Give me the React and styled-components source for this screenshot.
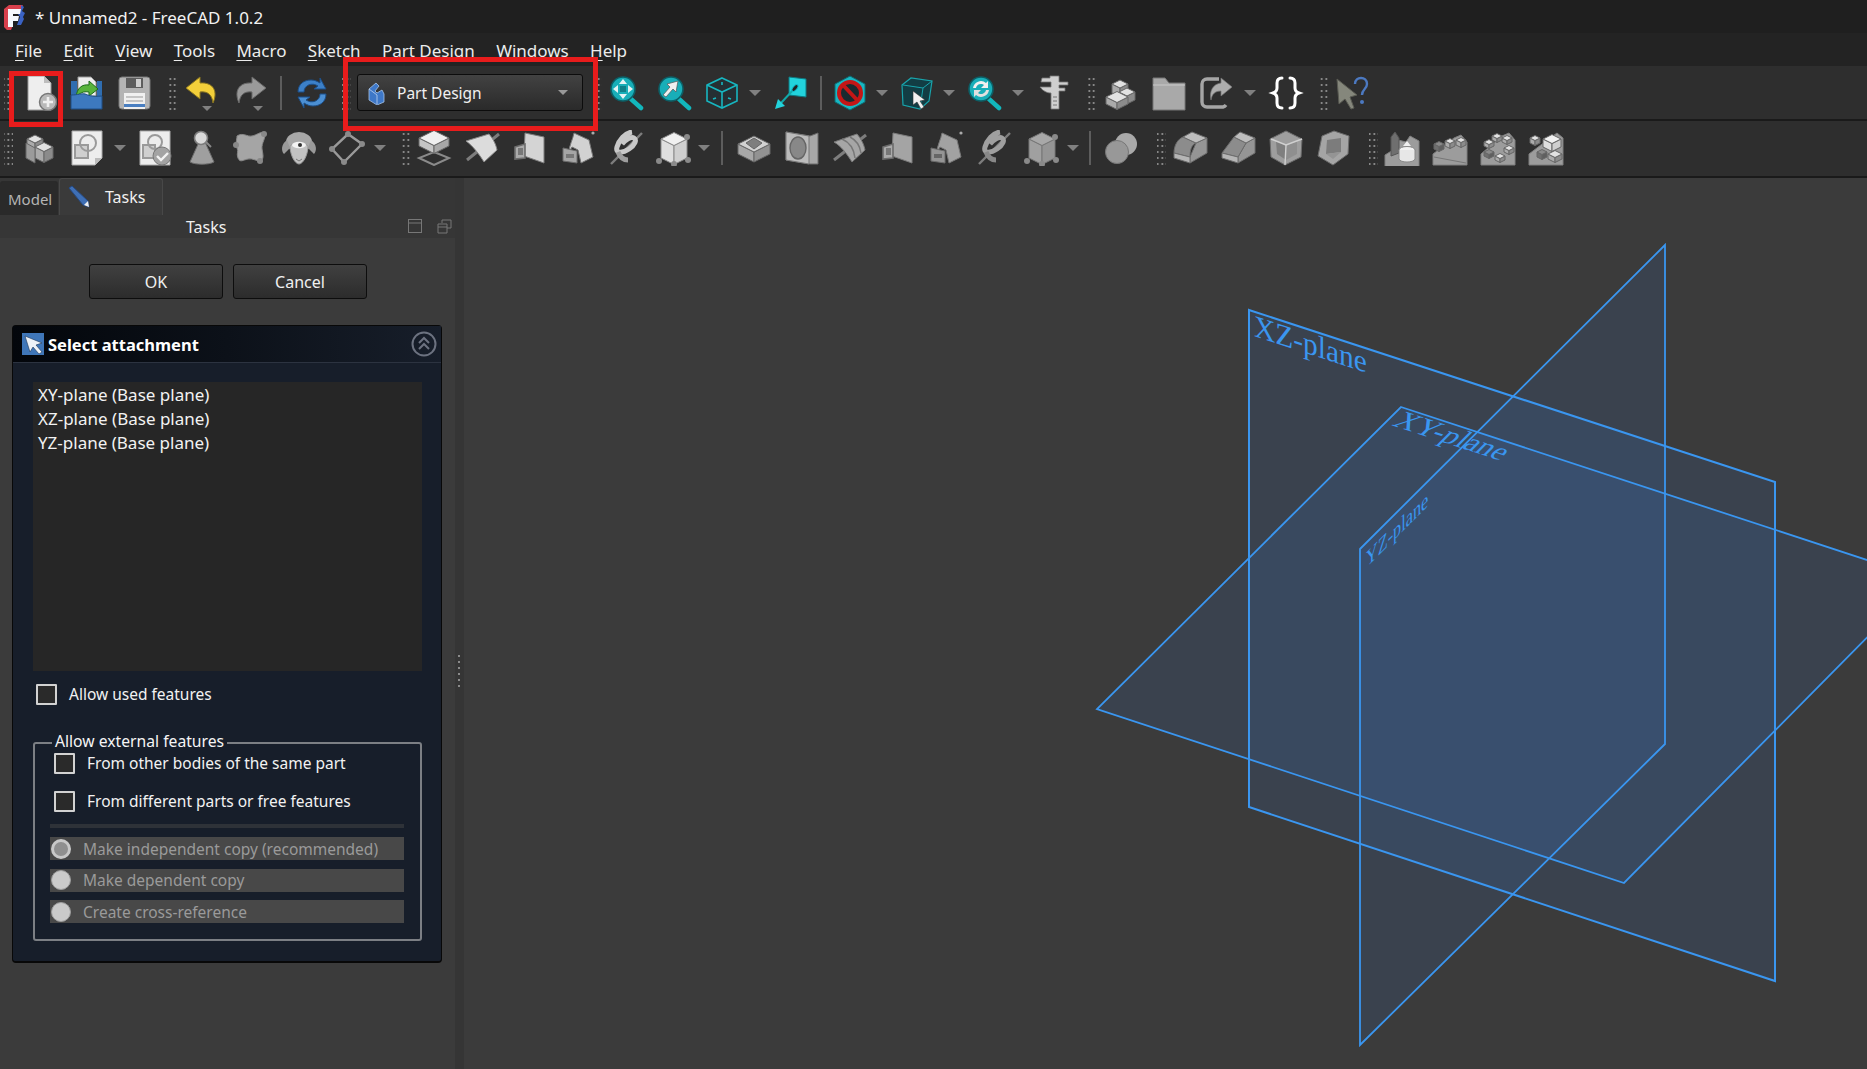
import React from 'react';
import styled, { createGlobalStyle } from 'styled-components';

const Global = createGlobalStyle`
  html, body { margin: 0; padding: 0; background: #3b3b3b; overflow: hidden; }
  #root { width: 1867px; height: 1069px; }
  * { box-sizing: border-box; }
`;

const Page = styled.div`
  position: relative;
  width: 1867px;
  height: 1069px;
  overflow: hidden;
  display: flex;
  flex-direction: column;
  background: #3b3b3b;
  color: #f0f0f0;
  font-family: "Noto Sans", "Open Sans", sans-serif;
  font-size: 16px;
`;
const TitleBar = styled.div`
  height: 33px;
  flex: none;
  display: flex;
  align-items: center;
  padding: 1px 0 0 4px;
  gap: 9px;
  background: #1f1f1f;
  font-size: 17px;
  color: #f2f2f2;
`;
const MenuBar = styled.div`
  height: 33px;
  flex: none;
  display: flex;
  align-items: center;
  padding: 2px 0 0 15px;
  gap: 21.3px;
  background: #232323;
  font-size: 17px;
  color: #ececec;
`;
const MenuItem = styled.span`
  white-space: nowrap;
  & u { text-underline-offset: 3px; text-decoration-thickness: 1px; }
`;
const Toolbar = styled.div`
  height: ${p => p.$h || 55}px;
  flex: none;
  display: flex;
  align-items: center;
  padding-left: 1px;
  padding-bottom: ${p => p.$pb || 0}px;
  background: #2e2e2e;
  border-bottom: 2px solid #1a1a1a;
`;
const ToolButton = styled.div`
  width: ${p => p.$w || 48}px;
  height: 44px;
  flex: none;
  display: flex;
  align-items: center;
  justify-content: center;
`;
const Grip = styled.div`
  width: ${p => p.$w}px;
  height: 34px;
  flex: none;
  background-image: radial-gradient(circle, #9a9a9a 0.9px, transparent 1.1px);
  background-size: 4.5px 6px;
  background-repeat: repeat;
  background-clip: content-box;
  padding-left: ${p => (p.$w - 9) / 2 + p.$shift}px;
  padding-right: ${p => (p.$w - 9) / 2 - p.$shift}px;
`;
const Sep = styled.div`
  width: ${p => p.$w}px;
  height: 34px;
  flex: none;
  display: flex;
  justify-content: center;
  &::after { content: ""; width: 2px; height: 100%; background: #5d5d5d; }
`;
const DropArrow = styled.div`
  width: ${p => p.$w || 20}px;
  height: 44px;
  flex: none;
  display: flex;
  align-items: center;
  justify-content: center;
  padding-right: 3px;
  &::after {
    content: "";
    width: 0; height: 0;
    border-left: 6px solid transparent;
    border-right: 6px solid transparent;
    border-top: 6px solid #808080;
  }
`;
const Combo = styled.div`
  width: 226px;
  height: 37px;
  flex: none;
  display: flex;
  align-items: center;
  padding: 0 14px 0 8px;
  gap: 11px;
  border: 1px solid #0c0c0c;
  border-radius: 3px;
  background: linear-gradient(#424242, #2a2a2a);
  font-size: 15.5px;
  color: #f0f0f0;
`;
const ComboLabel = styled.span` flex: 1; `;
const ComboArrow = styled.span`
  width: 0; height: 0;
  border-left: 5px solid transparent;
  border-right: 5px solid transparent;
  border-top: 5px solid #999;
`;
const Main = styled.div`
  flex: 1;
  min-height: 0;
  display: flex;
`;
const Side = styled.div`
  width: 455px;
  flex: none;
  display: flex;
  flex-direction: column;
  background: #3b3b3b;
`;
const Splitter = styled.div`
  width: 9px;
  flex: none;
  background: #353535;
  display: flex;
  flex-direction: column;
  align-items: center;
  justify-content: flex-start;
  gap: 4px;
  padding-top: 477px;
  padding-right: 1px;
`;
const SplitDot = styled.i` width: 2px; height: 2px; background: #8a8a8a; `;
const Viewport = styled.div`
  flex: 1;
  min-width: 0;
  background: #3b3b3b;
  & > svg { display: block; }
`;
const Tabs = styled.div`
  height: 37px;
  flex: none;
  display: flex;
  align-items: flex-end;
  gap: 1px;
  background: #363636;
`;
const Tab = styled.div`
  height: ${p => (p.$active ? 37 : 34)}px;
  width: ${p => p.$w}px;
  display: flex;
  align-items: center;
  gap: 14px;
  padding-left: 7px;
  border-radius: 3px 3px 0 0;
  border: 1px solid ${p => (p.$active ? '#484848' : '#2a2a2a')};
  border-bottom: none;
  background: ${p => (p.$active ? '#3a3a3a' : '#2a2a2a')};
  color: ${p => (p.$active ? '#f0f0f0' : '#b4b4b4')};
  font-size: ${p => (p.$active ? 16 : 15)}px;
`;
const DockTitle = styled.div`
  height: 23px;
  flex: none;
  position: relative;
  display: flex;
  align-items: center;
  justify-content: flex-end;
  gap: 14px;
  padding-right: 3px;
  background: #363636;
`;
const DockLabel = styled.span`
  position: absolute;
  left: 186px;
  font-size: 16px;
  color: #f0f0f0;
`;
const Buttons = styled.div`
  display: flex;
  gap: 10px;
  padding: 26px 0 0 89px;
`;
const PushButton = styled.div`
  width: 134px;
  height: 35px;
  display: flex;
  align-items: center;
  justify-content: center;
  border: 1px solid #0d0d0d;
  border-radius: 3px;
  background: linear-gradient(#404040, #2c2c2c);
  font-size: 16px;
`;
const Box = styled.div`
  margin: 26px 13px 0 12px;
  height: 638px;
  display: flex;
  flex-direction: column;
  border: 1px solid #080808;
  border-width: 1px 1px 2px 1px;
  border-radius: 4px;
  background: #171e2a;
`;
const BoxHeader = styled.div`
  height: 37px;
  flex: none;
  display: flex;
  align-items: center;
  gap: 4px;
  padding: 0 4px 0 9px;
  background: linear-gradient(90deg, #03060b 0%, #0c1119 50%, #171e2a 100%);
  border-bottom: 1px solid #2c3340;
  font-weight: 700;
  font-size: 16.5px;
  color: #fff;
`;
const BoxTitle = styled.span` flex: 1; `;
const ListBox = styled.div`
  margin: 19px 19px 0 20px;
  height: 289px;
  flex: none;
  padding: 1px 5px;
  background: #262626;
  font-size: 17px;
  line-height: 24px;
`;
const ListItem = styled.div` color: #f2f2f2; `;
const CheckRow = styled.div`
  display: flex;
  align-items: center;
  gap: 12px;
  font-size: 15.5px;
  color: #f2f2f2;
  margin: ${p => p.$m};
`;
const CheckBox = styled.span`
  width: 21px;
  height: 21px;
  flex: none;
  border: 2px solid #d2d2d2;
  background: #2a2a2a;
  border-radius: 1px;
`;
const Group = styled.div`
  position: relative;
  margin: 37px 19px 0 20px;
  height: 199px;
  border: 2px solid #7c7f84;
  border-radius: 3px;
  padding: 8px 16px 0 19px;
`;
const Legend = styled.span`
  position: absolute;
  top: -13px;
  left: 17px;
  line-height: 20px;
  padding: 0 3px;
  background: #171e2a;
  font-size: 15.7px;
  color: #f5f5f5;
`;
const Rule = styled.div`
  height: 4px;
  margin: 12px 0 9px -4px;
  background: #2e3238;
`;
const RadioRow = styled.div`
  height: 23px;
  margin: 0 0 8.5px -4px;
  display: flex;
  align-items: center;
  gap: 12px;
  background: #484848;
  font-size: 15.5px;
  color: #9a9a9a;
  padding-left: 1px;
`;
const Radio = styled.span`
  width: 20px;
  height: 20px;
  flex: none;
  border-radius: 50%;
  background: ${p => (p.$on ? '#8f8f8f' : '#cacaca')};
  border: ${p => (p.$on ? '3px solid #c8c8c8' : '1px solid #9c9c9c')};
`;
const RedBox = styled.div`
  position: absolute;
  left: ${p => p.$x}px;
  top: ${p => p.$y}px;
  width: ${p => p.$w}px;
  height: ${p => p.$h}px;
  border: 5px solid #e81c1c;
  pointer-events: none;
`;

/* ---------- icon helpers ---------- */
const Ic = ({ children, s = 36 }) => (
  <svg width={s} height={s} viewBox="0 0 36 36" fill="none">{children}</svg>
);
const pts = a => a.map(p => p.join(',')).join(' ');
const Iso = ({ x, y, s, h, t = '#e2e2e2', l = '#ababab', r = '#8b8b8b', e = '#666' }) => (
  <g stroke={e} strokeWidth="1" strokeLinejoin="round">
    <polygon fill={l} points={pts([[x - s, y], [x, y + s * 0.5], [x, y + s * 0.5 + h], [x - s, y + h]])} />
    <polygon fill={r} points={pts([[x + s, y], [x, y + s * 0.5], [x, y + s * 0.5 + h], [x + s, y + h]])} />
    <polygon fill={t} points={pts([[x, y - s * 0.5], [x + s, y], [x, y + s * 0.5], [x - s, y]])} />
  </g>
);
const Mag = ({ children }) => (
  <>
    <line x1="23" y1="24" x2="33" y2="33" stroke="#12b7bd" strokeWidth="4.5" strokeLinecap="round" />
    <circle cx="15" cy="14" r="12" fill="#18aeb8" stroke="#0c5f66" strokeWidth="1.6" />
    {children}
  </>
);

const I = {
  New: () => <Ic><path d="M7 1h16l7 7v27H7z" fill="#eeeeee" stroke="#999" /><path d="M23 1v7h7z" fill="#bdbdbd" /><circle cx="27" cy="27" r="8.5" fill="#b9b9b9" stroke="#777" strokeWidth="1.5" /><path d="M27 22v10M22 27h10" stroke="#efefef" strokeWidth="2.6" /></Ic>,
  Open: () => <Ic><path d="M9 2h13l5 5v14H9z" fill="#eee" stroke="#999" /><path d="M2 6h6v20H2z" fill="#2f6db0" /><path d="M28 6h5v20h-5z" fill="#2f6db0" /><path d="M7 22c1-9 6-13 13-12V6l9 8-9 7v-4c-6-1-9 1-13 5z" fill="#58b33c" stroke="#1f6b1c" /><path d="M2 20c7 0 11-2 14-1s6 3 17 2v13H2z" fill="#3d79bf" stroke="#1f4f85" /></Ic>,
  Save: () => <Ic><rect x="2" y="2" width="31" height="32" rx="3" fill="#b4b4b4" stroke="#777" /><rect x="9" y="3" width="17" height="10" fill="#5d5d5d" /><rect x="19" y="4" width="5" height="8" fill="#d0d0d0" /><rect x="7" y="18" width="21" height="16" fill="#f0f0f0" /><path d="M9 22h17M9 26h17" stroke="#999" /><rect x="7" y="29" width="21" height="3" fill="#4a7fc1" /></Ic>,
  Undo: () => <Ic><path d="M16 2 2 13l14 11v-7c8-1 12 3 13 11 5-11 1-21-13-20z" fill="#f3cf3a" stroke="#8a7620" /><polygon points="18,31 28,31 23,36" fill="#808080" /></Ic>,
  Redo: () => <Ic><path d="M20 2 34 13 20 24v-7c-8-1-12 3-13 11-5-11-1-21 13-20z" fill="#9a9a9a" stroke="#6a6a6a" /><polygon points="21,31 31,31 26,36" fill="#808080" /></Ic>,
  Refresh: () => <Ic><path d="M4 17C4 9 10 5 17 5c3 0 6 1 9 3V3l6 11H20l4-3c-6-4-14-1-14 6z" fill="#3c80c8" stroke="#1b4f8a" /><path d="M32 19c0 8-6 12-13 12-3 0-6-1-9-3v5L4 22h12l-4 3c6 4 14 1 14-6z" fill="#4b8fd3" stroke="#1b4f8a" /></Ic>,
  Fit: () => <Ic><Mag><path d="M15 4l4 5h-8zM15 24l4-5h-8zM5 14l5-4v8zM25 14l-5-4v8z" fill="#e4f3f4" /><rect x="12" y="11" width="6" height="6" fill="#0f7f88" /></Mag></Ic>,
  Sel: () => <Ic><Mag><path d="M22 6 11 9l3 3-7 8 3 2 7-8 3 3z" fill="#f0f0f0" stroke="#555" strokeWidth=".7" /></Mag></Ic>,
  Cube: () => <Ic><g stroke="#17b6c0" strokeWidth="1.6"><polygon points="18,3 33,10 33,26 18,33 3,26 3,10" fill="#252f33" /><path d="M3 10l15 7 15-7M18 17v16" /><path d="M18 7v3M9 24l3-1M24 23l3 1" /></g></Ic>,
  Plane: () => <Ic><polygon points="16,2 33,4 33,22 16,20" fill="#22d3dc" stroke="#0d7a82" /><path d="M21 14 8 28" stroke="#1aa" strokeWidth="2" /><ellipse cx="22" cy="13" rx="2" ry="4" transform="rotate(40 22 13)" fill="#222" stroke="#1bc" /><polygon points="2,34 5,24 12,31" fill="#22d3dc" /></Ic>,
  No: () => <Ic><polygon points="18,1 33,9 33,27 18,35 3,27 3,9" fill="#18b6c2" stroke="#0c6a70" /><circle cx="18" cy="18" r="11" stroke="#c41616" strokeWidth="4" fill="#1a2a30" /><line x1="11" y1="10" x2="26" y2="26" stroke="#c41616" strokeWidth="4" /></Ic>,
  CubeSel: () => <Ic><polygon points="3,10 12,3 33,6 30,26 21,34 4,30" fill="#123d44" stroke="#18a4ac" strokeWidth="1.2" /><path d="M4 10l20 3 9-7M24 13l-3 20" stroke="#18a4ac" strokeWidth="1" /><path d="M14 16v14l4-3 4 7 3-2-4-6 5-1z" fill="#f2f2f2" stroke="#333" strokeWidth=".6" /></Ic>,
  Sync: () => <Ic><Mag><path d="M7 13a8 8 0 0 1 13-5l2-2v7h-7l3-3a5 5 0 0 0-8 3z" fill="#f0f0f0" /><path d="M23 15a8 8 0 0 1-13 5l-2 2v-7h7l-3 3a5 5 0 0 0 8-3z" fill="#e0e0e0" /></Mag></Ic>,
  Caliper: () => <Ic><path d="M14 1h9v6h9v3h-9v3h6v3h-6v18h-8V18c-4 0-8-2-11-6h11V7H5l1-4h8z" fill="#cfcfcf" stroke="#777" strokeWidth=".8" /><path d="M17 22h4M17 26h4M17 30h4" stroke="#777" /></Ic>,
  Part: () => <Ic><Iso x={17} y={9} s={8} h={9} /><Iso x={24} y={17} s={8} h={8} /><Iso x={14} y={22} s={11} h={7} /></Ic>,
  Folder: () => <Ic><path d="M2 3h12l4 5h16v27H2z" fill="#a9a9a9" stroke="#777" /><path d="M2 10h32" stroke="#c9c9c9" /></Ic>,
  Share: () => <Ic><path d="M20 4H8a5 5 0 0 0-5 5v18a5 5 0 0 0 5 5h16a5 5 0 0 0 3-2" stroke="#a6a6a6" strokeWidth="3.4" /><path d="M22 3l11 9-11 9v-5c-6 0-9 3-10 9-2-9 2-16 10-17z" fill="#adadad" stroke="#777" strokeWidth=".7" /></Ic>,
  Braces: () => <Ic><g strokeWidth="3" stroke="#fff" strokeLinecap="round"><path d="M14 3c-4 0-5 2-5 5v5c0 3-1 4-4 5 3 1 4 2 4 5v5c0 3 1 5 5 5" /><path d="M22 3c4 0 5 2 5 5v5c0 3 1 4 4 5-3 1-4 2-4 5v5c0 3-1 5-5 5" /></g></Ic>,
  Help: () => <Ic><path d="M3 4l20 16-7 2 4 11-3 1-6-10-6 5z" fill="#85877c" stroke="#5a5b53" /><path d="M21 9c0-4 3-6 6-6s6 2 6 6c0 5-5 5-5 11" stroke="#4c79c1" strokeWidth="2.4" /><circle cx="28" cy="27" r="2" fill="#4c79c1" /></Ic>,

  Body: () => <Ic><Iso x={14} y={9} s={8} h={14} /><Iso x={23} y={17} s={9} h={11} /><polygon points="5,13 14,18 14,33 5,28" fill="#9b9b9b" stroke="#666" /></Ic>,
  Sketch: () => <Ic><path d="M3 1h30v27l-7 7H3z" fill="#ededed" stroke="#aaa" /><path d="M33 28h-7v7z" fill="#bbb" /><rect x="6" y="15" width="13" height="13" stroke="#9a9a9a" strokeWidth="2" fill="#cfcfcf" /><circle cx="19" cy="13" r="8" stroke="#9a9a9a" strokeWidth="2" /></Ic>,
  SketchCheck: () => <Ic><path d="M3 1h30v34H3z" fill="#ededed" stroke="#aaa" /><rect x="6" y="15" width="12" height="13" stroke="#9a9a9a" strokeWidth="2" fill="#cfcfcf" /><circle cx="18" cy="12" r="7" stroke="#9a9a9a" strokeWidth="2" /><circle cx="25" cy="26" r="9" fill="#a3a3a3" stroke="#777" /><path d="M20 26l4 4 7-7" stroke="#f2f2f2" strokeWidth="2.4" /></Ic>,
  Pawn: () => <Ic><path d="M14 12 5 32c5 3 19 3 24 0L20 12z" fill="#9f9f9f" stroke="#6d6d6d" /><circle cx="16" cy="8" r="6.5" fill="#d9d9d9" stroke="#7c7c7c" strokeWidth="1.6" /><line x1="21" y1="12" x2="26" y2="17" stroke="#888" strokeWidth="2" /></Ic>,
  Map: () => <Ic><path d="M4 6c6-4 10 1 15 0s9-5 12-3c3 4-3 10-2 16s2 9-1 12c-6 0-8-3-13-2S7 33 5 28s1-6-1-10 0-8 0-12z" fill="#a5a5a5" stroke="#888" /><circle cx="31" cy="4" r="3" fill="#888" /><circle cx="3" cy="15" r="3" fill="#888" /><circle cx="27" cy="31" r="3" fill="#888" /></Ic>,
  Sheep: () => <Ic><ellipse cx="18" cy="12" rx="13" ry="10" fill="#a8a8a8" /><path d="M6 10C0 14 0 21 3 24l6-6zM30 10c6 4 6 11 3 14l-6-6z" fill="#999" /><path d="M9 16c0 9 5 18 9 18s9-9 9-18c-4-4-14-4-18 0z" fill="#c2c2c2" stroke="#999" /><ellipse cx="18" cy="15" rx="7" ry="3.2" fill="#f3f3f3" /><circle cx="19" cy="15" r="2" fill="#333" /><path d="M15 29l3 2 3-2" stroke="#777" /></Ic>,
  Diamond: () => <Ic><polygon points="19,4 33,14 15,32 3,19" stroke="#9a9a9a" strokeWidth="2.4" /><g fill="#8a8a8a"><circle cx="19" cy="4" r="3" /><circle cx="33" cy="14" r="3" /><circle cx="15" cy="32" r="3" /><circle cx="3" cy="19" r="3" /></g></Ic>,

  Pad: () => <Ic><polygon points="18,22 33,28 18,35 3,28" stroke="#8a8a8a" strokeWidth="2" /><Iso x={18} y={8} s={15} h={8} t="#efefef" l="#c5c5c5" r="#a8a8a8" /></Ic>,
  Rev: () => <Ic><line x1="3" y1="30" x2="35" y2="4" stroke="#7d7d7d" strokeWidth="3" /><path d="M2 11 25 4c5 6 7 11 8 16L20 32C15 24 9 16 2 11z" fill="#dcdcdc" stroke="#888" /></Ic>,
  Loft: () => <Ic><polygon points="13,3 32,7 32,33 12,26" fill="#d4d4d4" stroke="#7c7c7c" /><polygon points="3,17 13,14 13,28 3,29" fill="#aaa" stroke="#6c6c6c" strokeWidth="1.6" /><rect x="6" y="18" width="5" height="7" fill="#777" /></Ic>,
  Pipe: () => <Ic><path d="M14 3l15 7 4 17-12 6-3-13-6-3-3 5C9 16 13 9 14 3z" fill="#d2d2d2" stroke="#777" /><polygon points="3,18 17,21 17,33 3,31" fill="#a5a5a5" stroke="#6c6c6c" /><rect x="6" y="24" width="8" height="4" fill="#777" /><circle cx="33" cy="3" r="1.6" fill="#aaa" /></Ic>,
  Helix: () => <Ic><line x1="3" y1="34" x2="34" y2="3" stroke="#7d7d7d" strokeWidth="2.4" /><path d="M24 2c-7 1-13 8-15 15s6 6 12 2 8-9 5-11-9 2-12 6" stroke="#c8c8c8" strokeWidth="5" /><path d="M10 22c2 5 6 8 10 8" stroke="#9d9d9d" strokeWidth="5" /></Ic>,
  Prim: () => <Ic><Iso x={18} y={9} s={13} h={19} t="#f0f0f0" l="#dfdfdf" r="#cfcfcf" e="#8a8a8a" /><g fill="#8a8a8a"><circle cx="31" cy="7" r="3" /><circle cx="3" cy="31" r="3" /><circle cx="32" cy="30" r="3" /><circle cx="18" cy="34" r="3" /></g></Ic>,

  Pocket: () => <Ic><Iso x={18} y={14} s={16} h={10} t="#d2d2d2" l="#a8a8a8" r="#929292" /><polygon points="18,8 26,13 18,19 10,13" fill="#7e7e7e" stroke="#666" /></Ic>,
  Hole: () => <Ic><polygon points="2,2 26,6 34,3 34,34 26,34 2,30" fill="#a8a8a8" stroke="#6c6c6c" /><polygon points="2,2 25,6 25,34 2,30" fill="#bcbcbc" stroke="#777" /><ellipse cx="14" cy="18" rx="8" ry="11" fill="#888" stroke="#666" strokeWidth="1.4" /></Ic>,
  Groove: () => <Ic><line x1="2" y1="30" x2="34" y2="5" stroke="#7d7d7d" strokeWidth="3" /><path d="M2 12 25 4c5 6 7 11 8 16L20 32C15 24 9 16 2 12z" fill="#a6a6a6" stroke="#777" /><path d="M10 9c7 3 12 10 13 19M18 7c6 3 10 9 11 16" stroke="#777" strokeWidth="1.5" /></Ic>,
  SubLoft: () => <Ic><polygon points="13,3 32,7 32,33 12,26" fill="#a4a4a4" stroke="#7c7c7c" /><polygon points="3,17 13,14 13,28 3,29" fill="#aaa" stroke="#6c6c6c" strokeWidth="1.6" /><rect x="6" y="18" width="5" height="7" fill="#777" /></Ic>,
  SubPipe: () => <Ic><path d="M14 3l15 7 4 17-12 6-3-13-6-3-3 5C9 16 13 9 14 3z" fill="#a2a2a2" stroke="#777" /><polygon points="3,18 17,21 17,33 3,31" fill="#959595" stroke="#6c6c6c" /><rect x="6" y="24" width="8" height="4" fill="#666" /><circle cx="33" cy="3" r="1.6" fill="#aaa" /></Ic>,
  SubHelix: () => <Ic><line x1="3" y1="34" x2="34" y2="3" stroke="#7d7d7d" strokeWidth="2.4" /><path d="M24 2c-7 1-13 8-15 15s6 6 12 2 8-9 5-11-9 2-12 6" stroke="#9f9f9f" strokeWidth="5" /><path d="M10 22c2 5 6 8 10 8" stroke="#888" strokeWidth="5" /></Ic>,
  SubPrim: () => <Ic><Iso x={18} y={9} s={13} h={19} t="#a8a8a8" l="#a0a0a0" r="#959595" e="#777" /><g fill="#8a8a8a"><circle cx="31" cy="7" r="3" /><circle cx="3" cy="31" r="3" /><circle cx="32" cy="30" r="3" /><circle cx="18" cy="34" r="3" /></g></Ic>,
  Bool: () => <Ic><circle cx="22" cy="14" r="11" fill="#a9a9a9" /><circle cx="13" cy="22" r="11.5" fill="#989898" stroke="#777" /></Ic>,

  Fillet: () => <Ic><g stroke="#6c6c6c" strokeLinejoin="round"><polygon points="24,13 35,8 35,23 18,33 18,27" fill="#959595" /><path d="M2 23C2 15 6 9 11 7L24 13c-5 2-6 8-6 14z" fill="#8c8c8c" /><polygon points="11,7 20,2 35,8 24,13" fill="#bdbdbd" /><polygon points="2,23 18,27 18,33 2,28" fill="#b5b5b5" /></g></Ic>,
  Chamfer: () => <Ic><g stroke="#6c6c6c" strokeLinejoin="round"><polygon points="26,13 35,8 35,23 18,33 18,27" fill="#959595" /><polygon points="2,23 14,7 26,13 18,27" fill="#8c8c8c" /><polygon points="14,7 20,2 35,8 26,13" fill="#bdbdbd" /><polygon points="2,23 18,27 18,33 2,28" fill="#b5b5b5" /></g></Ic>,
  Draft: () => <Ic><polygon points="18,1 34,9 33,27 17,35 3,27 2,9" fill="#9e9e9e" stroke="#6c6c6c" /><polygon points="8,11 18,16 18,30 9,24" fill="#7f7f7f" /><polygon points="18,16 29,11 29,24 18,30" fill="#8f8f8f" /><path d="M3 9l15 6 16-6M18 15l-1 20" stroke="#d0d0d0" strokeWidth="1.4" /></Ic>,
  Thick: () => <Ic><polygon points="6,6 18,1 33,6 32,24 17,35 2,26" fill="#a5a5a5" stroke="#6c6c6c" /><polygon points="11,10 25,8 25,22 10,24" fill="#7c7c7c" /><polygon points="10,24 25,22 17,29" fill="#949494" /></Ic>,

  Mirror: () => <Ic><path d="M1 25l8-5 5-10 8 2 4-6 9 5v26H1z" fill="#9c9c9c" stroke="#7e7e7e" /><polygon points="7,7 11,2 15,8 15,23 7,26" fill="#6f6f6f" stroke="#555" /><ellipse cx="23" cy="20" rx="8" ry="3.5" fill="#f2f2f2" stroke="#888" /><path d="M15 20v9c1 4 15 4 16 0v-9" fill="#e7e7e7" stroke="#888" /><path d="M19 16l4-5 4 5z" fill="#f0f0f0" /></Ic>,
  Linear: () => <Ic><path d="M1 24 22 8l7-3 6 7v23H1z" fill="#9c9c9c" stroke="#7e7e7e" /><Iso x={7} y={14} s={5} h={5} t="#8a8a8a" l="#6f6f6f" r="#5f5f5f" /><Iso x={18} y={11} s={5} h={5} /><Iso x={29} y={10} s={5} h={5} /><path d="M2 27l32 6" stroke="#777" /></Ic>,
  Polar: () => <Ic><path d="M1 24 22 6l7-3 6 7v25H1z" fill="#9c9c9c" stroke="#7e7e7e" /><Iso x={9} y={22} s={5} h={4} t="#8a8a8a" l="#6f6f6f" r="#5f5f5f" /><Iso x={20} y={26} s={5} h={4} /><Iso x={29} y={18} s={5} h={4} /><Iso x={27} y={8} s={5} h={4} /><Iso x={17} y={6} s={5} h={4} /><Iso x={9} y={12} s={5} h={4} /></Ic>,
  Multi: () => <Ic><path d="M1 24 22 8l7-5 6 5v27H1z" fill="#9c9c9c" stroke="#7e7e7e" /><Iso x={7} y={8} s={5} h={5} /><Iso x={24} y={9} s={9} h={8} t="#f2f2f2" l="#dedede" r="#cfcfcf" /><Iso x={14} y={22} s={5} h={5} t="#8a8a8a" l="#6f6f6f" r="#5f5f5f" /><Iso x={27} y={24} s={7} h={5} /></Ic>,
};

const Logo = () => (
  <svg width="22" height="25" viewBox="0 0 22 25">
    <polygon points="0,4 5,0 19,0 17,4 9,5 9,20 7,25 3,25 0,22" fill="#d8404c" />
    <polygon points="17,0 20,2 18,6 21,8 19,12 20,14 17,20 13,20 16,12 14,9 17,4" fill="#3a62c4" />
    <polygon points="4,4 17,4 16,9 9,9 9,11 15,11 14,16 9,16 9,22 4,22" fill="#f5f7fb" />
  </svg>
);
const PartDesignIcon = () => (
  <svg width="20" height="24" viewBox="0 0 20 24">
    <path d="M3 8l7-6 3 3-4 5 2 2 5-3 2 4v8l-7 3-8-5z" fill="#3e78c8" stroke="#a6c4ea" strokeWidth=".8" />
    <path d="M3 8l8 6v9" stroke="#bcd2ef" strokeWidth=".8" fill="none" />
  </svg>
);
const Pencil = () => (
  <svg width="24" height="24" viewBox="0 0 24 24">
    <path d="M2 3l3-2 16 15 1 6-6-2z" fill="#3f6fb5" stroke="#254a85" />
    <path d="M17 20l4-4 1 6z" fill="#f0f0f0" />
  </svg>
);
const CursorBadge = () => (
  <svg width="22" height="22" viewBox="0 0 22 22">
    <rect width="22" height="22" fill="#3f76b8" />
    <path d="M3 3l17 7-6 2 6 7-3 2-6-7-3 5z" fill="#eef2f7" stroke="#1c3558" strokeWidth=".6" />
  </svg>
);
const Collapse = () => (
  <svg width="26" height="26" viewBox="0 0 26 26" fill="none" stroke="#6c7280" strokeWidth="2">
    <circle cx="13" cy="13" r="11.5" />
    <path d="M8 12l5-5 5 5M8 18l5-5 5 5" />
  </svg>
);
const DockBtn = ({ float }) => (
  <svg width="15" height="15" viewBox="0 0 15 15" fill="none" stroke="#777">
    {float
      ? <path d="M5 1h9v8h-4M1 5h9v9H1zM1 8h9M5 4V1" />
      : <><rect x=".5" y=".5" width="13" height="13" /><path d="M.5 4h13" /></>}
  </svg>
);

/* ---------- toolbar data ---------- */
const row1 = [
  ['g', 14, 0], 'New', 'Open', 'Save', ['g', 19, 5], 'Undo', 'Redo', ['s', 14], 'Refresh', ['g', 21, 0], 'combo',
  ['g', 19, 5], 'Fit', 'Sel', 'Cube', ['d', 21], 'Plane', ['s', 11], 'No', ['d', 19], 'CubeSel', ['d', 19], 'Sync', ['d', 22], 'Caliper',
  ['g', 19, 5], 'Part', 'Folder', 'Share', ['d', 21], 'Braces', ['g', 18, 4], 'Help',
];
const row2 = [
  ['g', 14, 0], 'Body', 'Sketch', ['d', 20], 'SketchCheck', 'Pawn', 'Map', 'Sheep', 'Diamond', ['d', 21],
  ['g', 18, 4], 'Pad', 'Rev', 'Loft', 'Pipe', 'Helix', 'Prim', ['d', 15], ['s', 17],
  'Pocket', 'Hole', 'Groove', 'SubLoft', 'SubPipe', 'SubHelix', 'SubPrim', ['d', 16], ['s', 16],
  'Bool', ['g', 20, 5], 'Fillet', 'Chamfer', 'Draft', 'Thick', ['g', 20, 5], 'Mirror', 'Linear', 'Polar', 'Multi',
];

const renderTool = (it, i) => {
  if (it === 'combo') {
    return (
      <Combo key={i}>
        <PartDesignIcon />
        <ComboLabel>Part Design</ComboLabel>
        <ComboArrow />
      </Combo>
    );
  }
  if (Array.isArray(it)) {
    const [k, w, shift] = it;
    if (k === 'g') return <Grip key={i} $w={w} $shift={shift} />;
    if (k === 's') return <Sep key={i} $w={w} />;
    return <DropArrow key={i} $w={w} />;
  }
  const C = I[it];
  return <ToolButton key={i}><C /></ToolButton>;
};

const menus = [
  ['F', 'ile'], ['E', 'dit'], ['V', 'iew'], ['T', 'ools'], ['M', 'acro'], ['S', 'ketch'],
  ['Part ', 'D', 'esign'], ['W', 'indows'], ['H', 'elp'],
];

const XZ = '1249,310 1775,482 1775,981 1249,807';
const XYFull = '1401,407 1925,579 1624,883 1097,709';
const YZ = '1360,549 1665,245 1665,744 1360,1045';

const Planes = () => (
  <svg width="1403" height="891" viewBox="464 178 1403 891">
    <g fill="rgba(60,125,220,.12)" stroke="none">
      <polygon points={XZ} />
      <polygon points={XYFull} />
      <polygon points={YZ} />
    </g>
    <g fill="none" stroke="#3a96f0">
      <polygon points={XZ} strokeWidth="2" />
      <polygon points={XYFull} strokeWidth="1.8" />
      <polygon points={YZ} strokeWidth="1.8" />
    </g>
    <g fill="#3a96f0" fontFamily='"Liberation Serif", serif'>
      <text fontSize="31" transform="matrix(.95 .31 0 1 1254 336)">XZ-plane</text>
      <text fontSize="30" transform="matrix(.95 .31 -.7 .7 1391 425)">XY-plane</text>
      <text fontSize="23" transform="matrix(.707 -.707 0 1 1366 568)">YZ-plane</text>
    </g>
  </svg>
);

export default function App() {
  return (
    <Page>
      <Global />
      <TitleBar>
        <Logo />
        <span>* Unnamed2 - FreeCAD 1.0.2</span>
      </TitleBar>
      <MenuBar>
        {menus.map((m, i) => (
          <MenuItem key={i}>
            {m.length === 3 ? <>{m[0]}<u>{m[1]}</u>{m[2]}</> : <><u>{m[0]}</u>{m[1]}</>}
          </MenuItem>
        ))}
      </MenuBar>
      <Toolbar>{row1.map(renderTool)}</Toolbar>
      <Toolbar $h={57} $pb={2}>{row2.map(renderTool)}</Toolbar>
      <Main>
        <Side>
          <Tabs>
            <Tab $w={58}>Model</Tab>
            <Tab $active $w={104}><Pencil />Tasks</Tab>
          </Tabs>
          <DockTitle>
            <DockLabel>Tasks</DockLabel>
            <DockBtn />
            <DockBtn float />
          </DockTitle>
          <Buttons>
            <PushButton>OK</PushButton>
            <PushButton>Cancel</PushButton>
          </Buttons>
          <Box>
            <BoxHeader>
              <CursorBadge />
              <BoxTitle>Select attachment</BoxTitle>
              <Collapse />
            </BoxHeader>
            <ListBox>
              <ListItem>XY-plane (Base plane)</ListItem>
              <ListItem>XZ-plane (Base plane)</ListItem>
              <ListItem>YZ-plane (Base plane)</ListItem>
            </ListBox>
            <CheckRow $m="12px 0 0 23px"><CheckBox />Allow used features</CheckRow>
            <Group>
              <Legend>Allow external features</Legend>
              <CheckRow $m="0"><CheckBox />From other bodies of the same part</CheckRow>
              <CheckRow $m="16px 0 0"><CheckBox />From different parts or free features</CheckRow>
              <Rule />
              <RadioRow><Radio $on />Make independent copy (recommended)</RadioRow>
              <RadioRow><Radio />Make dependent copy</RadioRow>
              <RadioRow><Radio />Create cross-reference</RadioRow>
            </Group>
          </Box>
        </Side>
        <Splitter>
          {[0, 1, 2, 3, 4, 5].map(i => <SplitDot key={i} />)}
        </Splitter>
        <Viewport><Planes /></Viewport>
      </Main>
      <RedBox $x={9} $y={71} $w={54} $h={56} />
      <RedBox $x={343} $y={57} $w={255} $h={74} />
    </Page>
  );
}
